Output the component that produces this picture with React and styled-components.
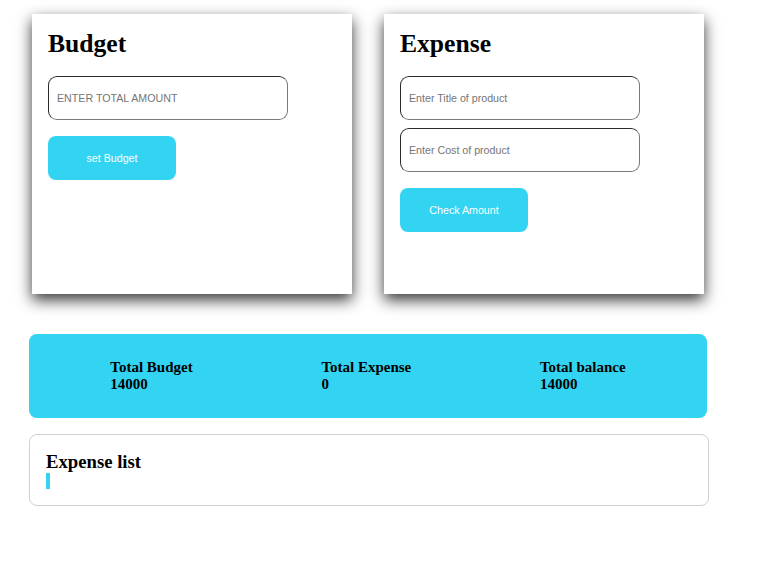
import React from 'react';
import styled, { createGlobalStyle } from 'styled-components';

const GlobalStyle = createGlobalStyle`
  body {
    margin: 0;
    background: #fff;
    font-family: "Liberation Serif", "Times New Roman", serif;
  }
`;

const cyan = '#33d3f2';

let Page = styled.div`
  display: flex;
  flex-direction: column;
  padding: 14px 0 0 29px;
`;

let CardRow = styled.div`
  display: flex;
  gap: 32px;
  padding-left: 3px;
`;

let Card = styled.div`
  width: 320px;
  height: 280px;
  box-sizing: border-box;
  padding: 16px;
  background: #fff;
  box-shadow: 0 6px 14px rgba(0, 0, 0, 0.78);
  display: flex;
  flex-direction: column;
  align-items: flex-start;
  gap: 8px;
`;

let Title = styled.h2`
  margin: 0 0 10px;
  font-size: 25.6px;
  line-height: 28px;
  font-weight: bold;
`;

let Input = styled.input`
  width: 240px;
  height: 44px;
  box-sizing: border-box;
  padding: 0 8px;
  border: 1px solid;
  border-color: #2b2b2b #7a7a7a #7a7a7a #2b2b2b;
  border-radius: 9px;
  font-family: "Liberation Sans", Arial, sans-serif;
  font-size: 10.67px;
  outline: none;
  &::placeholder {
    color: #757575;
  }
`;

let Button = styled.button`
  margin-top: 8px;
  width: 128px;
  height: 44px;
  border: none;
  border-radius: 8px;
  background: ${cyan};
  color: #fff;
  font-family: "Liberation Sans", Arial, sans-serif;
  font-size: 10.67px;
  cursor: pointer;
`;

let Totals = styled.div`
  margin-top: 40px;
  width: 678px;
  box-sizing: border-box;
  padding: 25px 17px;
  background: ${cyan};
  border-radius: 8px;
  display: flex;
  justify-content: space-around;
`;

let Stat = styled.div`
  font-size: 15px;
  line-height: 17px;
  font-weight: bold;
  color: #000;
`;

let ListBox = styled.div`
  margin-top: 16px;
  width: 680px;
  box-sizing: border-box;
  padding: 16px;
  border: 1px solid #d0d0d0;
  border-radius: 8px;
`;

let ListTitle = styled.h3`
  margin: 0;
  font-size: 18.7px;
  line-height: 21px;
  font-weight: bold;
`;

let ListBar = styled.div`
  margin-top: 1px;
  width: 4px;
  height: 16px;
  background: ${cyan};
`;

class App extends React.Component {
  constructor(props) {
    super(props);
    this.state = {
      budget: 14000,
      expense: 0
    }
  }

  render() {
    let { budget, expense } = this.state;
    return (
      <Page>
        <GlobalStyle />
        <CardRow>
          <Card>
            <Title>Budget</Title>
            <Input placeholder='ENTER TOTAL AMOUNT' />
            <Button>set Budget</Button>
          </Card>
          <Card>
            <Title>Expense</Title>
            <Input placeholder='Enter Title of product' />
            <Input placeholder='Enter Cost of product' />
            <Button>Check Amount</Button>
          </Card>
        </CardRow>
        <Totals>
          <Stat>Total Budget<br />{budget}</Stat>
          <Stat>Total Expense<br />{expense}</Stat>
          <Stat>Total balance<br />{budget - expense}</Stat>
        </Totals>
        <ListBox>
          <ListTitle>Expense list</ListTitle>
          <ListBar />
        </ListBox>
      </Page>
    )
  }
}

export default App;
